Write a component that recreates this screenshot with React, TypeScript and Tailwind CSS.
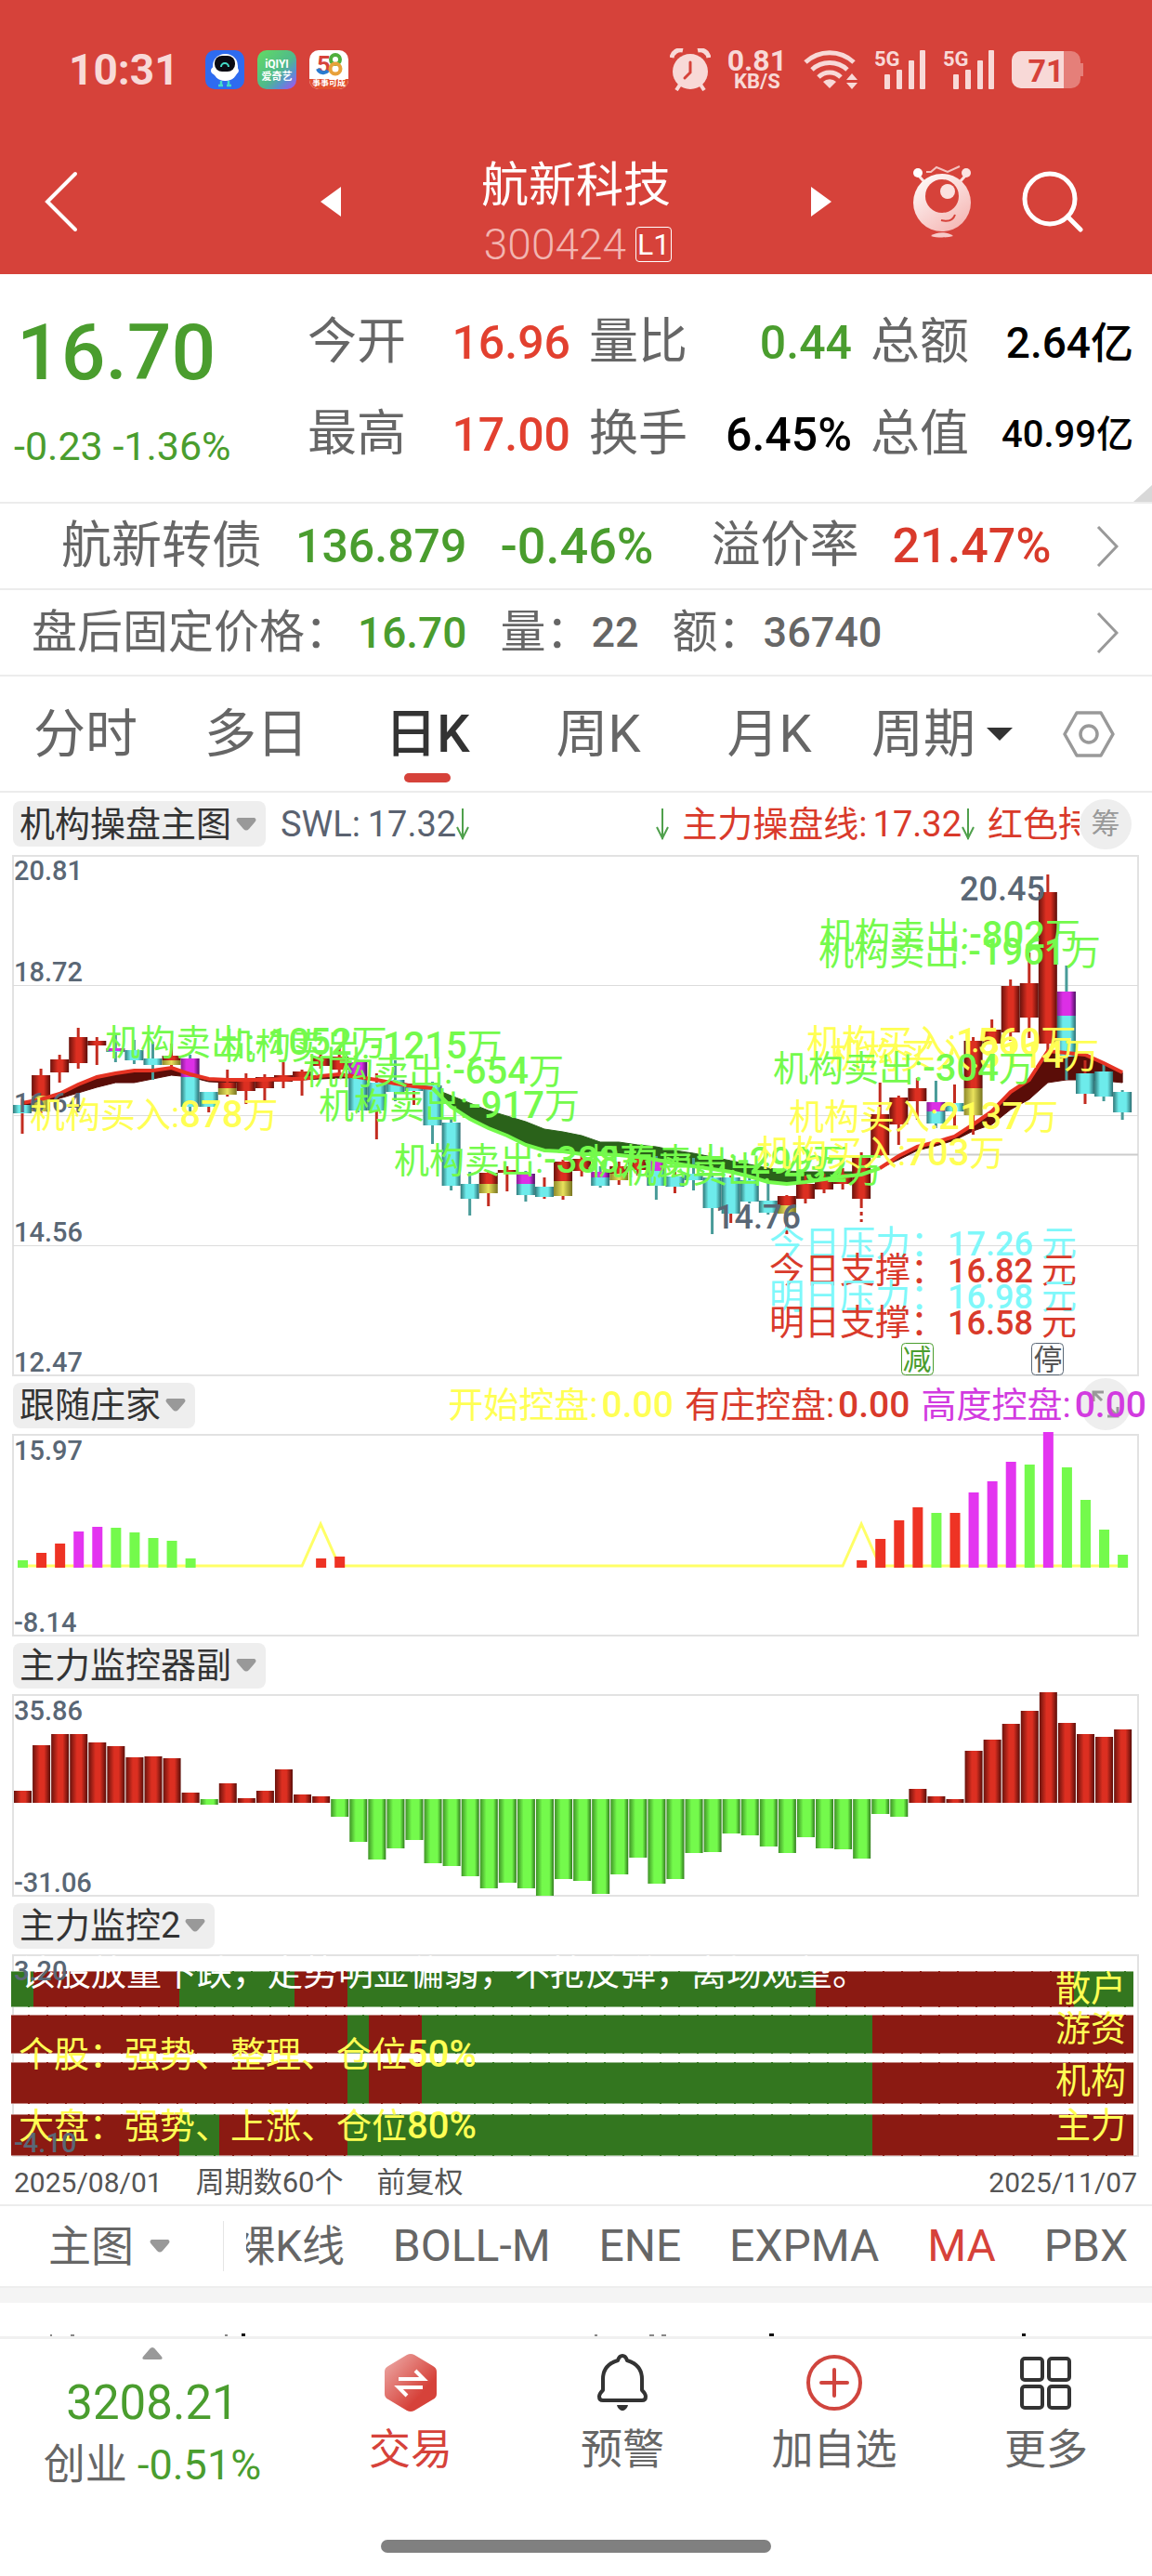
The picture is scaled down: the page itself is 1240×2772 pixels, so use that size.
import React from "react";

const SANS = "font-['Roboto','Noto_Sans_CJK_SC',sans-serif]";
const INK = "#5a6775";
const LIME = "#74fa4c";
const SUN = "#ffff54";
const RED = "#d93a2b";
const MAGENTA = "#e335f0";
const STEP = 20.07;
const cx = (i: number) => 24 + STEP * i;

/* ---------- status bar ---------- */

function AppBadges() {
  return (
    <div className="flex items-center gap-[14px]">
      <svg width="42" height="42" viewBox="0 0 42 42" aria-hidden="true">
        <rect width="42" height="42" rx="10" fill="#2e6bf0" />
        <ellipse cx="21" cy="22" rx="15" ry="7" fill="#fff" />
        <rect x="8" y="4" width="27" height="29" rx="13" fill="#fff" />
        <rect x="10" y="6" width="22" height="17" rx="8" fill="#0b0b14" />
        <path d="M17 18a4 4 0 0 1 8 0" fill="none" stroke="#45dcc8" strokeWidth="2" />
        <path d="M17 33v5M25 33v5M14 38h5M23 38h5" stroke="#45dcc8" strokeWidth="2.4" />
      </svg>
      <svg width="42" height="42" viewBox="0 0 42 42" aria-hidden="true">
        <defs>
          <linearGradient id="qy" x1="0" y1="0" x2="1" y2="1">
            <stop offset="0" stopColor="#62dc62" />
            <stop offset="0.55" stopColor="#4fb98c" />
            <stop offset="0.75" stopColor="#5b8fd0" />
            <stop offset="1" stopColor="#b04af0" />
          </linearGradient>
        </defs>
        <rect width="42" height="42" rx="10" fill="url(#qy)" />
        <text x="21" y="19" fontSize="12" fontWeight="700" fill="#fff" textAnchor="middle">iQIYI</text>
        <text x="21" y="32" fontSize="11" fontWeight="700" fill="#fff" textAnchor="middle">爱奇艺</text>
      </svg>
      <svg width="42" height="42" viewBox="0 0 42 42" aria-hidden="true">
        <rect width="42" height="42" rx="10" fill="#fff" />
        <path d="M0 31h42v1a10 10 0 0 1-10 10H10A10 10 0 0 1 0 32z" fill="#e2502f" />
        <text x="8" y="25" fontSize="26" fontWeight="700" fill="#d6423a">5</text>
        <path d="M9 20a6.500 6.500 0 0 0 11 2" fill="none" stroke="#2a7bd0" strokeWidth="4" />
        <circle cx="28" cy="10" r="5" fill="none" stroke="#4fae3c" strokeWidth="4" />
        <circle cx="28" cy="20" r="5.500" fill="none" stroke="#e8a13a" strokeWidth="4" />
        <text x="21" y="38" fontSize="9" fontWeight="700" fill="#fff" textAnchor="middle">事事可成</text>
      </svg>
    </div>
  );
}

function Signal() {
  return (
    <svg className="overflow-visible" width="56" height="44" viewBox="0 0 56 44" fill="#f8d9d7" aria-hidden="true">
      <text x="0" y="18" fontSize="22" fontWeight="700">5G</text>
      <rect x="11" y="27" width="6" height="16" rx="1" />
      <rect x="24" y="22" width="6" height="21" rx="1" />
      <rect x="37" y="12" width="6" height="31" rx="1" />
      <rect x="49" y="1" width="6" height="42" rx="1" />
    </svg>
  );
}

function StatusBar() {
  return (
    <div className="flex h-[150px] items-center justify-between pr-[73px] pl-[74px] text-[#f8d9d7]">
      <div className="flex items-center gap-7">
        <span className="text-[46px] leading-none font-bold">10:31</span>
        <AppBadges />
      </div>
      <div className="flex items-center gap-[18px]">
        <svg width="44" height="46" viewBox="0 0 44 46" aria-hidden="true">
          <circle cx="22" cy="25" r="19" fill="#f8d9d7" />
          <path d="M2 10a10 10 0 0 1 12-8M42 10a10 10 0 0 0-12-8" stroke="#f8d9d7" strokeWidth="5" fill="none" />
          <path d="m11 39-4 6M33 39l4 6" stroke="#f8d9d7" strokeWidth="4" />
          <path d="M22 15v11l-6 6" stroke="#d6423a" strokeWidth="3" fill="none" strokeLinecap="round" />
        </svg>
        <div className="flex flex-col items-center font-bold">
          <span className="text-[32px] leading-[26px]">0.81</span>
          <span className="text-[22px] leading-[20px]">KB/S</span>
        </div>
        <svg width="58" height="44" viewBox="0 0 58 44" aria-hidden="true">
          <g fill="none" stroke="#f8d9d7" strokeWidth="5">
            <path d="M2 14a38 38 0 0 1 52 0" />
            <path d="M9 22a28 28 0 0 1 38 0" />
            <path d="M16 30a17 17 0 0 1 24 0" />
          </g>
          <path d="M28 42l-7-7a10 10 0 0 1 14 0z" fill="#f8d9d7" />
          <path d="M46 33l6-7 6 7zM46 36l6 7 6-7z" fill="#f8d9d7" />
        </svg>
        <Signal />
        <Signal />
        <svg width="78" height="42" viewBox="0 0 78 42" aria-hidden="true">
          <path d="M10 1h54a10 10 0 0 1 10 10v3h3v14h-3v3a10 10 0 0 1-10 10H10A10 10 0 0 1 0 31V11A10 10 0 0 1 10 1z" fill="#e57f79" />
          <path d="M10 1h46v40H10A10 10 0 0 1 0 31V11A10 10 0 0 1 10 1z" fill="#f8d9d7" />
          <text x="37" y="34" fontSize="34" fontWeight="700" fill="#d6423a" textAnchor="middle">71</text>
        </svg>
      </div>
    </div>
  );
}

/* ---------- title bar ---------- */

function TitleBar() {
  return (
    <div className="-mt-3 grid h-[157px] grid-cols-[1fr_550px_1fr] items-center text-white">
      <button aria-label="返回" className="justify-self-start pl-[46px]">
        <svg width="38" height="68" viewBox="0 0 38 68" fill="none" stroke="#fff" strokeWidth="4" strokeLinecap="round" aria-hidden="true">
          <path d="M35 4 5 34l30 30" />
        </svg>
      </button>
      <div className="flex h-full items-center justify-between">
        <button aria-label="上一只">
          <svg width="22" height="32" viewBox="0 0 22 32" fill="#fff" aria-hidden="true"><path d="M22 0v32L0 16z" /></svg>
        </button>
        <div className="flex flex-col items-center self-end pb-[2px]">
          <h1 className="text-[51px] leading-[66px]">航新科技</h1>
          <p className="flex items-center gap-[10px] pl-[4px] text-[46px] leading-[60px] font-light text-[#f2b5b1]">
            300424
            <span className="rounded-[4px] border border-white px-[1px] text-[32px] leading-[36px] font-normal text-white">L1</span>
          </p>
        </div>
        <button aria-label="下一只">
          <svg width="22" height="32" viewBox="0 0 22 32" fill="#fff" aria-hidden="true"><path d="M0 0v32l22-16z" /></svg>
        </button>
      </div>
      <div className="flex items-center justify-end gap-[54px] pr-[74px]">
        <button aria-label="助手">
          <svg width="64" height="80" viewBox="0 0 64 80" aria-hidden="true">
            <defs>
              <linearGradient id="bot" x1="0" y1="0" x2="0.700" y2="1">
                <stop offset="0" stopColor="#fff" />
                <stop offset="1" stopColor="#f5b9b6" />
              </linearGradient>
            </defs>
            <path d="M5 10l9 10M59 10l-9 10" stroke="#fbe3e2" strokeWidth="3" />
            <circle cx="6" cy="9" r="5" fill="#fff" />
            <circle cx="58" cy="9" r="5" fill="#fbe3e2" />
            <path d="M15 8h5l6-5 12 5L51 2" fill="none" stroke="#f5c3c0" strokeWidth="2" />
            <circle cx="32" cy="41" r="31" fill="url(#bot)" />
            <circle cx="32" cy="34" r="18" fill="#d6423a" />
            <circle cx="38" cy="29" r="8" fill="#fbe0df" />
            <path d="M31 60c8 2 13 0 15-6" fill="none" stroke="#d6423a" strokeWidth="2" />
            <path d="M20 77c6-5 18-5 24 0-6 2-18 2-24 0z" fill="#f7c9c7" />
          </svg>
        </button>
        <button aria-label="搜索">
          <svg width="66" height="66" viewBox="0 0 66 66" fill="none" stroke="#fff" strokeWidth="5" strokeLinecap="round" aria-hidden="true">
            <circle cx="30" cy="30" r="27" />
            <path d="m49 49 14 14" />
          </svg>
        </button>
      </div>
    </div>
  );
}

/* ---------- quote ---------- */

const stats = [
  { k: "今开", v: "16.96", c: "text-[50px] text-[#e2402f]" },
  { k: "量比", v: "0.44", c: "text-[50px] text-[#4a9d2e]" },
  { k: "总额", v: "2.64亿", c: "text-[46px] text-black" },
  { k: "最高", v: "17.00", c: "text-[50px] text-[#e2402f]" },
  { k: "换手", v: "6.45%", c: "text-[50px] text-black" },
  { k: "总值", v: "40.99亿", c: "text-[40px] text-black" },
];

function Chevron() {
  return (
    <svg width="24" height="44" viewBox="0 0 24 44" fill="none" stroke="#999" strokeWidth="3" aria-hidden="true">
      <path d="m2 1 20 21L2 43" />
    </svg>
  );
}

function Quote() {
  return (
    <section className="relative flex h-[247px] border-b-2 border-[#ececec] pt-6 pr-5">
      <div className="w-[331px] shrink-0 whitespace-nowrap text-[#4a9d2e]">
        <p className="pl-[18px] text-[84px] leading-[122px] font-medium">16.70</p>
        <p className="pl-[15px] text-[43px] leading-[78px]">-0.23 -1.36%</p>
      </div>
      <dl className="grid flex-1 auto-rows-[99px] grid-cols-3 gap-x-5">
        {stats.map((s) => (
          <div key={s.k} className="flex items-center justify-between whitespace-nowrap">
            <dt className="text-[53px] leading-none text-[#666]">{s.k}</dt>
            <dd className={`leading-none font-medium ${s.c}`}>{s.v}</dd>
          </div>
        ))}
      </dl>
      <svg className="absolute right-0 bottom-0" width="20" height="18" viewBox="0 0 20 18" aria-hidden="true">
        <path d="M20 0v18H0z" fill="#d8d8d8" />
      </svg>
    </section>
  );
}

function InfoRows() {
  return (
    <>
      <a href="#bond" className="flex h-[93px] items-center border-b-2 border-[#ececec] pr-9 pl-[66px] leading-none whitespace-nowrap">
        <span className="text-[54px] text-[#666]">航新转债</span>
        <span className="ml-9 text-[50px] font-medium text-[#4a9d2e]">136.879</span>
        <span className="ml-9 text-[54px] font-medium text-[#4a9d2e]">-0.46%</span>
        <span className="ml-[62px] text-[53px] text-[#666]">溢价率</span>
        <span className="ml-9 text-[52px] font-medium text-[#d93a2b]">21.47%</span>
        <span className="ml-auto"><Chevron /></span>
      </a>
      <a href="#after-hours" className="flex h-[93px] items-center border-b-2 border-[#ececec] pr-9 pl-[34px] text-[49px] leading-none whitespace-nowrap text-[#666]">
        <span>盘后固定价格：</span>
        <span className="ml-2 text-[46px] font-medium text-[#4a9d2e]">16.70</span>
        <span className="ml-9">量：</span>
        <span className="text-[45px] font-medium">22</span>
        <span className="ml-9">额：</span>
        <span className="text-[45px] font-medium">36740</span>
        <span className="ml-auto"><Chevron /></span>
      </a>
    </>
  );
}

const periods = ["分时", "多日", "日K", "周K", "月K"];

function PeriodTabs() {
  return (
    <nav className="flex h-[125px] border-b-2 border-[#ececec] pr-10 text-[56px] leading-none whitespace-nowrap text-[#666]">
      <div className="grid flex-1 grid-cols-5">
        {periods.map((p) => (
          <button key={p} className={p === "日K" ? "relative font-medium text-[#333]" : "relative"}>
            {p}
            {p === "日K" && <span className="absolute bottom-[9px] left-1/2 h-[10px] w-[50px] -translate-x-1/2 rounded-full bg-[#d6423a]" />}
          </button>
        ))}
      </div>
      <button className="flex items-center gap-3 pl-[18px]">
        周期
        <svg width="28" height="14" viewBox="0 0 28 14" fill="#333" aria-hidden="true"><path d="M0 0h28L14 14z" /></svg>
      </button>
      <button aria-label="设置" className="pl-[54px]">
        <svg width="56" height="50" viewBox="0 0 56 50" fill="none" stroke="#999" strokeWidth="3.500" strokeLinejoin="round" aria-hidden="true">
          <path d="M15 2h26l13 23-13 23H15L2 25z" />
          <circle cx="28" cy="25" r="9" />
        </svg>
      </button>
    </nav>
  );
}

/* ---------- charts ---------- */

function Chip({ label }: { label: string }) {
  return (
    <button className="flex h-[49px] items-center gap-[5px] rounded-lg bg-[#eee] pr-[10px] pl-[7px] text-[38px] leading-none whitespace-nowrap text-[#333]">
      {label}
      <svg width="22" height="14" viewBox="0 0 22 14" fill="#999" aria-hidden="true"><path d="M2 0h18q3 2 0 5l-6 7q-3 3-6 0L2 5q-3-3 0-5z" /></svg>
    </button>
  );
}

function Down() {
  return (
    <svg width="14" height="34" viewBox="0 0 14 34" fill="none" stroke="#4fa04c" strokeWidth="2" aria-hidden="true">
      <path d="M7 0v33M1 20l6 12 6-12" />
    </svg>
  );
}

// [kind, high, low, top, bottom, split?]; kind: r red, c cyan, x cyan body with red wick, p magenta over cyan, y red over yellow
type Candle = [string, number, number, number, number, number?];
const candles: Candle[] = [
  ["x", 263, 300, 269, 278], ["y", 230, 278, 237, 276, 259], ["r", 215, 245, 220, 234], ["r", 186, 230, 196, 224],
  ["r", 196, 226, 200, 205], ["p", 194, 223, 208, 212, 211], ["c", 199, 225, 210, 221], ["c", 201, 242, 219, 226],
  ["y", 203, 231, 216, 226, 221], ["p", 215, 276, 219, 271, 239], ["x", 255, 277, 255, 271], ["y", 231, 260, 245, 258, 251],
  ["r", 235, 268, 243, 254], ["r", 236, 264, 239, 251], ["r", 223, 251, 237, 244], ["r", 231, 259, 233, 242],
  ["r", 214, 230, 217, 227], ["r", 208, 236, 217, 231], ["p", 220, 277, 223, 275, 240], ["x", 235, 306, 245, 275],
  ["c", 221, 265, 242, 255], ["x", 243, 269, 250, 254], ["c", 244, 311, 248, 291], ["c", 282, 361, 288, 356],
  ["c", 341, 388, 354, 370], ["y", 341, 378, 342, 364, 354], ["r", 335, 362, 339, 342], ["p", 340, 373, 343, 366, 354],
  ["x", 347, 370, 357, 368], ["y", 328, 371, 330, 367, 351], ["r", 322, 346, 327, 340], ["p", 335, 358, 341, 356, 347],
  ["y", 330, 355, 335, 350, 343], ["r", 322, 345, 326, 339], ["p", 324, 371, 328, 356, 340], ["x", 341, 364, 346, 357],
  ["c", 326, 361, 343, 350], ["c", 345, 408, 347, 380], ["x", 345, 396, 347, 386], ["c", 347, 375, 350, 373],
  ["c", 351, 387, 372, 385], ["y", 366, 408, 367, 386, 377], ["r", 345, 375, 354, 370], ["r", 343, 364, 349, 360],
  ["r", 337, 360, 343, 354], ["r", 320, 395, 326, 370], ["r", 245, 324, 279, 323], ["r", 259, 312, 261, 290],
  ["r", 240, 285, 251, 265], ["p", 243, 294, 266, 289, 276], ["x", 247, 292, 267, 276], ["y", 196, 301, 200, 280, 251],
  ["r", 177, 204, 188, 203], ["r", 134, 200, 141, 191], ["r", 105, 197, 138, 175], ["r", 21, 210, 40, 203],
  ["p", 119, 242, 147, 217, 173], ["x", 221, 268, 235, 257], ["c", 225, 265, 233, 260], ["c", 253, 285, 255, 277],
];

const fast = [267, 263, 257, 247, 239, 235, 232, 232, 229, 236, 241, 242, 242, 242, 241, 241, 238, 236, 239, 242, 246, 249, 251, 271, 284, 294, 302, 312, 318, 319, 322, 322, 323, 325, 328, 332, 335, 338, 341, 346, 352, 354, 352, 349, 346, 344, 337, 324, 314, 309, 303, 290, 276, 255, 242, 211, 213, 215, 224, 234];
const slow = [271, 268, 262, 256, 250, 245, 245, 241, 237, 239, 244, 245, 244, 243, 242, 242, 241, 240, 240, 242, 245, 247, 251, 259, 267, 275, 281, 287, 295, 298, 302, 309, 309, 312, 314, 318, 321, 325, 329, 333, 337, 340, 341, 341, 341, 341, 337, 328, 318, 313, 307, 297, 290, 274, 263, 245, 242, 242, 243, 245];

const marks: [string, string, number, number, string][] = [
  ["机构买入:", "878", 32, 293, SUN],
  ["机构卖出:", "-1052", 113, 215, LIME],
  ["机构卖出:", "-1215", 237, 219, LIME],
  ["机构卖出:", "-654", 326, 246, LIME],
  ["机构卖出:", "-917", 343, 283, LIME],
  ["机构卖出:", "-388", 424, 342, LIME],
  ["机构卖出:", "-299", 632, 343, LIME],
  ["机构卖出:", "-432", 669, 352, LIME],
  ["机构卖出:", "-802", 882, 100, LIME],
  ["机构卖出:", "-1961", 881, 118, LIME],
  ["机构买入:", "1560", 868, 215, SUN],
  ["机构买入:", "3114", 893, 229, SUN],
  ["机构卖出:", "-304", 832, 243, LIME],
  ["机构买入:", "2137", 849, 295, SUN],
  ["机构买入:", "703", 814, 334, SUN],
];

const levels: [string, string, number, string][] = [
  ["今日压力：", "17.26", 431, "#7ff8fa"],
  ["今日支撑：", "16.82", 460, RED],
  ["明日压力：", "16.98", 488, "#7ff8fa"],
  ["明日支撑：", "16.58", 516, RED],
];

function Defs() {
  return (
    <defs>
      <linearGradient id="gr"><stop offset="0" stopColor="#6a120c" /><stop offset="0.400" stopColor="#dc2f21" /><stop offset="0.650" stopColor="#dc2f21" /><stop offset="1" stopColor="#5a0d08" /></linearGradient>
      <linearGradient id="gc"><stop offset="0" stopColor="#2f7778" /><stop offset="0.300" stopColor="#6debeb" /><stop offset="0.700" stopColor="#6debeb" /><stop offset="1" stopColor="#2a6c70" /></linearGradient>
      <linearGradient id="gp"><stop offset="0" stopColor="#8a1f95" /><stop offset="0.300" stopColor="#dc2fe6" /><stop offset="0.700" stopColor="#dc2fe6" /><stop offset="1" stopColor="#4a1060" /></linearGradient>
      <linearGradient id="gy"><stop offset="0" stopColor="#8f8a2b" /><stop offset="0.500" stopColor="#e9e25c" /><stop offset="1" stopColor="#77731f" /></linearGradient>
      <linearGradient id="gg"><stop offset="0" stopColor="#3f9426" /><stop offset="0.350" stopColor="#74fa4c" /><stop offset="0.750" stopColor="#74fa4c" /><stop offset="1" stopColor="#2f7a1b" /></linearGradient>
    </defs>
  );
}

function Axis({ y, children }: { y: number; children: string }) {
  return <text x="15" y={y} fontSize="29" fontWeight="500" fill={INK}>{children}</text>;
}

function Frame({ h }: { h: number }) {
  return <rect x="14" y="1" width="1211" height={h - 2} fill="none" stroke="#e2e2e2" strokeWidth="2" />;
}

function trend(from: number, to: number) {
  const up: string[] = [];
  const down: string[] = [];
  for (let i = from; i <= to; i++) {
    up.push(`${cx(i)},${fast[i]}`);
    down.unshift(`${cx(i)},${slow[i]}`);
  }
  return { line: up.join(" "), area: [...up, ...down].join(" ") };
}

function KLine() {
  const bands = [
    { ...trend(0, 22), dark: "#5a0d08", lit: "#e63323" },
    { ...trend(22, 46), dark: "#2a621a", lit: LIME },
    { ...trend(46, 59), dark: "#5a0d08", lit: "#e63323" },
  ];
  return (
    <svg viewBox="0 0 1240 561" className="block w-full overflow-visible" role="img" aria-label="日K线">
      <Defs />
      <Frame h={561} />
      <path d="M14 140.500h1211M14 280.500h1211M14 420.500h1211" stroke="#dcdcdc" />
      <path d="M948 322.500h277" stroke="#ccc" strokeWidth="2" />
      {bands.map((b) => (
        <polygon key={b.area} points={b.area} fill={b.dark} stroke={b.dark} />
      ))}
      {candles.map(([k, hi, lo, top, bot, split], i) => {
        const x = cx(i);
        const redWick = k === "r" || k === "x" || k === "y";
        const fillTop = { r: "url(#gr)", c: "url(#gc)", x: "url(#gc)", p: "url(#gp)", y: "url(#gr)" }[k];
        return (
          <g key={i}>
            <path d={`M${x} ${hi}V${lo}`} stroke={redWick ? "#c22c20" : "#489b99"} strokeWidth="3" strokeDasharray={i === 45 ? "60 4 4 4" : undefined} />
            <rect x={x - 10} y={top} width="20" height={(split ?? bot) - top} fill={fillTop} />
            {split && <rect x={x - 10} y={split} width="20" height={bot - split} fill={k === "p" ? "url(#gc)" : "url(#gy)"} />}
          </g>
        );
      })}
      {bands.map((b) => (
        <polyline key={b.line} points={b.line} fill="none" stroke={b.lit} strokeWidth="4" />
      ))}
      <Axis y={27}>20.81</Axis>
      <Axis y={136}>18.72</Axis>
      <Axis y={277}>16.64</Axis>
      <Axis y={416}>14.56</Axis>
      <Axis y={556}>12.47</Axis>
      <g fontSize="38">
        {marks.map(([t, v, x, y, c]) => (
          <text key={v} x={x} y={y} fill={c}>
            {t}
            <tspan fontSize="40" fontWeight="500">{v}</tspan>
            万
          </text>
        ))}
        {levels.map(([t, v, y, c]) => (
          <text key={t} y={y} fill={c}>
            <tspan x="828">{t}</tspan>
            <tspan x="1020" fontSize="36" fontWeight="500">{v}</tspan>
            <tspan x="1121">元</tspan>
          </text>
        ))}
      </g>
      <g fontSize="36" fontWeight="500" fill={INK}>
        <text x="1033" y="49">20.45</text>
        <text x="770" y="402">14.76</text>
      </g>
      <g fontSize="31" textAnchor="middle">
        <rect x="970.500" y="525.500" width="34" height="34" rx="4" fill="#fff" stroke="#4a9d2e" />
        <text x="987" y="554" fill="#4a9d2e">减</text>
        <rect x="1110.500" y="525.500" width="34" height="34" rx="4" fill="#fff" stroke={INK} />
        <text x="1128" y="554" fill="#555">停</text>
      </g>
    </svg>
  );
}

const follow: [number, string, number][] = [
  [0, LIME, 136], [1, "#ee3324", 128], [2, "#ee3324", 118], [3, MAGENTA, 105], [4, MAGENTA, 100], [5, LIME, 101], [6, LIME, 106],
  [7, LIME, 112], [8, LIME, 115], [9, LIME, 134], [16, "#ee3324", 134], [17, "#ee3324", 132], [45, "#ee3324", 136], [46, "#ee3324", 113],
  [47, "#ee3324", 93], [48, "#ee3324", 79], [49, LIME, 85], [50, "#ee3324", 85], [51, MAGENTA, 63], [52, MAGENTA, 51], [53, MAGENTA, 30],
  [54, LIME, 33], [55, MAGENTA, -2], [56, LIME, 36], [57, LIME, 71], [58, LIME, 103], [59, LIME, 130],
];

function FollowChart() {
  const line = [[0, 142], [15, 142], [16, 97], [17, 142], [44, 142], [45, 97], [46, 142], [59, 142]];
  return (
    <svg viewBox="0 0 1240 218" className="block w-full overflow-visible" role="img" aria-label="跟随庄家">
      <Frame h={218} />
      <polyline points={line.map(([i, y]) => `${cx(i)},${y}`).join(" ")} fill="none" stroke="#ffff66" strokeWidth="3" />
      {follow.map(([i, c, y]) => (
        <rect key={i} x={cx(i) - 5} y={y} width="11" height={144 - y} fill={c} />
      ))}
      <Axis y={28}>15.97</Axis>
      <Axis y={213}>-8.14</Axis>
    </svg>
  );
}

const force = [104, 55, 43, 43, 52, 56, 68, 67, 69, 106, 119, 96, 112, 104, 81, 108, 110, 132, 159, 178, 166, 157, 182, 185, 196, 209, 203, 209, 217, 199, 201, 215, 194, 176, 204, 199, 171, 170, 150, 152, 164, 171, 154, 166, 167, 177, 129, 132, 102, 110, 113, 61, 49, 32, 18, -2, 31, 43, 46, 38];

function ForceChart() {
  return (
    <svg viewBox="0 0 1240 218" className="block w-full overflow-visible" role="img" aria-label="主力监控器副">
      <Frame h={218} />
      {force.map((y, i) =>
        y > 117 ? (
          <rect key={i} x={cx(i) - 9} y={113} width="19" height={y - 113} fill="url(#gg)" />
        ) : (
          <rect key={i} x={cx(i) - 9} y={y} width="19" height={117 - y} fill="url(#gr)" />
        ),
      )}
      <Axis y={28}>35.86</Axis>
      <Axis y={213}>-31.06</Axis>
    </svg>
  );
}

const strips = [
  { y: 18, h: 39, first: "g", edges: [12, 36, 193, 317, 374, 878, 1156, 1220] },
  { y: 65, h: 42, first: "r", edges: [12, 374, 397, 454, 939, 1220] },
  { y: 116, h: 45, first: "r", edges: [12, 374, 397, 454, 939, 1220] },
  { y: 172, h: 45, first: "r", edges: [12, 193, 236, 374, 939, 1220] },
];

function StripChart() {
  return (
    <svg viewBox="0 0 1240 218" className="block w-full overflow-visible" role="img" aria-label="主力监控2">
      <Frame h={218} />
      {strips.map((s) => (
        <g key={s.y}>
          {s.edges.slice(1).map((e, i) => (
            <rect key={e} x={s.edges[i]} y={s.y} width={e - s.edges[i]} height={s.h} fill={(i % 2 === 0) === (s.first === "r") ? "#8b1a12" : "#33761f"} />
          ))}
          <path d={`M12 ${s.y + 0.5}H1220M12 ${s.y + s.h - 0.5}H1220`} stroke="#fff" strokeOpacity="0.450" strokeDasharray="18 2" />
        </g>
      ))}
      <g fontSize="38" fill={SUN}>
        <text x="22" y="33" fill="#fff">该股放量下跌，走势明显偏弱，不抢反弹，离场观望。</text>
        <text x="20" y="121">个股：强势、整理、仓位<tspan fontSize="40" fontWeight="500">50%</tspan></text>
        <text x="20" y="198">大盘：强势、上涨、仓位<tspan fontSize="40" fontWeight="500">80%</tspan></text>
        <text x="1136" y="50">散户</text>
        <text x="1136" y="93">游资</text>
        <text x="1136" y="149">机构</text>
        <text x="1136" y="197">主力</text>
      </g>
      <Axis y={28}>3.20</Axis>
      <Axis y={213}>-4.10</Axis>
    </svg>
  );
}

function Charts() {
  return (
    <section>
      <div className="flex h-[67px] items-center pr-[22px] pl-[14px] text-[38px] leading-none whitespace-nowrap">
        <Chip label="机构操盘主图" />
        <span className="ml-4 flex items-center text-[#5a6270]">SWL:&thinsp;17.32<Down /></span>
        <div className="ml-auto flex items-center overflow-hidden py-2 text-[#d93a2b]">
          <Down />
          <span className="ml-[14px]">主力操盘线:</span>
          <span className="ml-[6px]">17.32</span>
          <Down />
          <span className="ml-[14px] w-[99px] overflow-hidden py-1">红色持股</span>
        </div>
        <button className="h-[54px] w-[56px] rounded-full bg-[#eee] text-[31px] leading-none text-[#999]">筹</button>
      </div>
      <KLine />
      <div className="relative flex h-[62px] items-center justify-between pr-[6px] pl-[14px] text-[38px] leading-none whitespace-nowrap">
        <Chip label="跟随庄家" />
        <button aria-label="展开" className="absolute top-[2px] right-[23px] flex h-[56px] w-[54px] items-center justify-center rounded-full bg-[#eee]">
          <svg width="32" height="30" viewBox="0 0 32 30" fill="none" stroke="#999" strokeWidth="3" aria-hidden="true">
            <path d="M3 12V2h11M3 2l9 9M29 18v10H18M29 28l-9-9" />
          </svg>
        </button>
        <div className="relative flex gap-3">
          <span className="text-[#ffff54]">开始控盘:<b className="ml-1 text-[39px] font-medium">0.00</b></span>
          <span className="text-[#d93a2b]">有庄控盘:<b className="ml-1 text-[39px] font-medium">0.00</b></span>
          <span className="text-[#d23be0]">高度控盘:<b className="ml-1 text-[39px] font-medium">0.00</b></span>
        </div>
      </div>
      <FollowChart />
      <div className="flex h-[62px] items-center pl-[14px]"><Chip label="主力监控器副" /></div>
      <ForceChart />
      <div className="flex h-[62px] items-center pl-[14px]"><Chip label="主力监控2" /></div>
      <StripChart />
      <div className="flex h-[53px] items-center gap-9 border-b-2 border-[#ececec] pt-1 pr-[16px] pl-[15px] text-[30px] leading-none text-[#555]">
        <span>2025/08/01</span>
        <span className="text-[31px]">周期数60个</span>
        <span className="text-[31px]">前复权</span>
        <span className="ml-auto">2025/11/07</span>
      </div>
    </section>
  );
}

function IndicatorTabs() {
  return (
    <nav className="flex h-[86px] items-center text-[48px] leading-none whitespace-nowrap text-[#666]">
      <button className="flex w-[240px] shrink-0 items-center gap-4 pl-[52px] text-[46px]">
        主图
        <svg width="24" height="14" viewBox="0 0 22 14" fill="#999" aria-hidden="true"><path d="M2 0h18q3 2 0 5l-6 7q-3 3-6 0L2 5q-3-3 0-5z" /></svg>
      </button>
      <div className="flex flex-1 items-center justify-between border-l border-[#e5e5e5] pr-[26px] pl-[24px]">
        <button className="flex w-[106px] justify-end overflow-hidden py-1 text-[46px]">裸K线</button>
        <button>BOLL-M</button>
        <button>ENE</button>
        <button>EXPMA</button>
        <button className="text-[#d6423a]">MA</button>
        <button>PBX</button>
      </div>
    </nav>
  );
}

/* ---------- bottom bar ---------- */

const actions = [
  {
    label: "交易",
    cls: "text-[#d6423a]",
    icon: (
      <svg width="62" height="62" viewBox="0 0 62 62" aria-hidden="true">
        <defs>
          <linearGradient id="hx" x1="0" y1="0" x2="1" y2="1"><stop offset="0" stopColor="#eeb0ad" /><stop offset="0.700" stopColor="#d6423a" /></linearGradient>
        </defs>
        <path d="M27 1q4-2 8 0l20 12q4 2 4 6v24q0 4-4 6L35 61q-4 2-8 0L7 49q-4-2-4-6V19q0-4 4-6z" fill="url(#hx)" />
        <path d="M18 27h27l-9-9M44 36H18l9 9" fill="none" stroke="#fff" strokeWidth="4" />
      </svg>
    ),
  },
  {
    label: "预警",
    cls: "text-[#666]",
    icon: (
      <svg width="62" height="62" viewBox="0 0 62 62" fill="none" stroke="#333" strokeWidth="4" strokeLinejoin="round" aria-hidden="true">
        <path d="M31 2c3 0 4 2 5 5 10 3 16 10 16 20v12c3 3 4 5 4 7 0 3-2 4-4 4H10c-2 0-4-1-4-4 0-2 1-4 4-7V27C10 17 16 10 26 7c1-3 2-5 5-5z" />
        <path d="M25 55h12c-1 4-4 6-6 6s-5-2-6-6z" fill="#333" stroke="none" />
      </svg>
    ),
  },
  {
    label: "加自选",
    cls: "text-[#666]",
    icon: (
      <svg width="62" height="62" viewBox="0 0 62 62" fill="none" stroke="#d0453e" strokeWidth="4" strokeLinecap="round" aria-hidden="true">
        <circle cx="31" cy="31" r="28" />
        <path d="M31 17v28M17 31h28" />
      </svg>
    ),
  },
  {
    label: "更多",
    cls: "text-[#666]",
    icon: (
      <svg width="62" height="62" viewBox="0 0 62 62" fill="none" stroke="#333" strokeWidth="4" aria-hidden="true">
        <rect x="5" y="5" width="22" height="23" rx="3" />
        <rect x="34" y="5" width="22" height="23" rx="3" />
        <rect x="5" y="35" width="22" height="23" rx="3" />
        <rect x="34" y="35" width="22" height="23" rx="3" />
      </svg>
    ),
  },
];

function BottomBar() {
  return (
    <footer className="border-t-[3px] border-[#f0f0f0]">
      <div className="flex h-[180px]">
        <button className="flex w-[328px] shrink-0 flex-col items-center pt-[9px] text-[#4a9d2e]">
          <svg width="22" height="13" viewBox="0 0 22 13" fill="#999" aria-hidden="true"><path d="M11 0q2 0 4 3l6 7q2 3-2 3H3q-4 0-2-3l6-7q2-3 4-3z" /></svg>
          <span className="mt-[13px] text-[51px] leading-[68px]">3208.21</span>
          <span className="text-[45px] leading-[66px]"><span className="text-[#666]">创业</span> -0.51%</span>
        </button>
        {actions.map((a) => (
          <button key={a.label} className={`flex flex-1 flex-col items-center pt-[16px] ${a.cls}`}>
            {a.icon}
            <span className="mt-[10px] text-[45px] leading-[64px]">{a.label}</span>
          </button>
        ))}
      </div>
      <div className="flex justify-center pt-[36px] pb-6">
        <div className="h-[14px] w-[420px] rounded-full bg-[#808080]" />
      </div>
    </footer>
  );
}

export default function App() {
  return (
    <div className={`min-w-[1240px] bg-white ${SANS}`}>
      <header className="bg-[#d6423a]">
        <StatusBar />
        <TitleBar />
      </header>
      <main>
        <Quote />
        <InfoRows />
        <PeriodTabs />
        <Charts />
        <IndicatorTabs />
        <div className="h-[18px] border-t-2 border-[#eee] bg-[#f4f4f4]" />
        <svg viewBox="0 0 1240 36" className="block w-full" aria-hidden="true">
          <path d="M54 35h2M76 35h4M242 35h3M640 35h3M699 35h5M712 35h5M1100 35h4" stroke="#888" strokeWidth="2" />
          <path d="M260 34.500h4M828 34.500h5M1100 34.500h4" stroke="#111" strokeWidth="3" />
        </svg>
      </main>
      <BottomBar />
    </div>
  );
}
